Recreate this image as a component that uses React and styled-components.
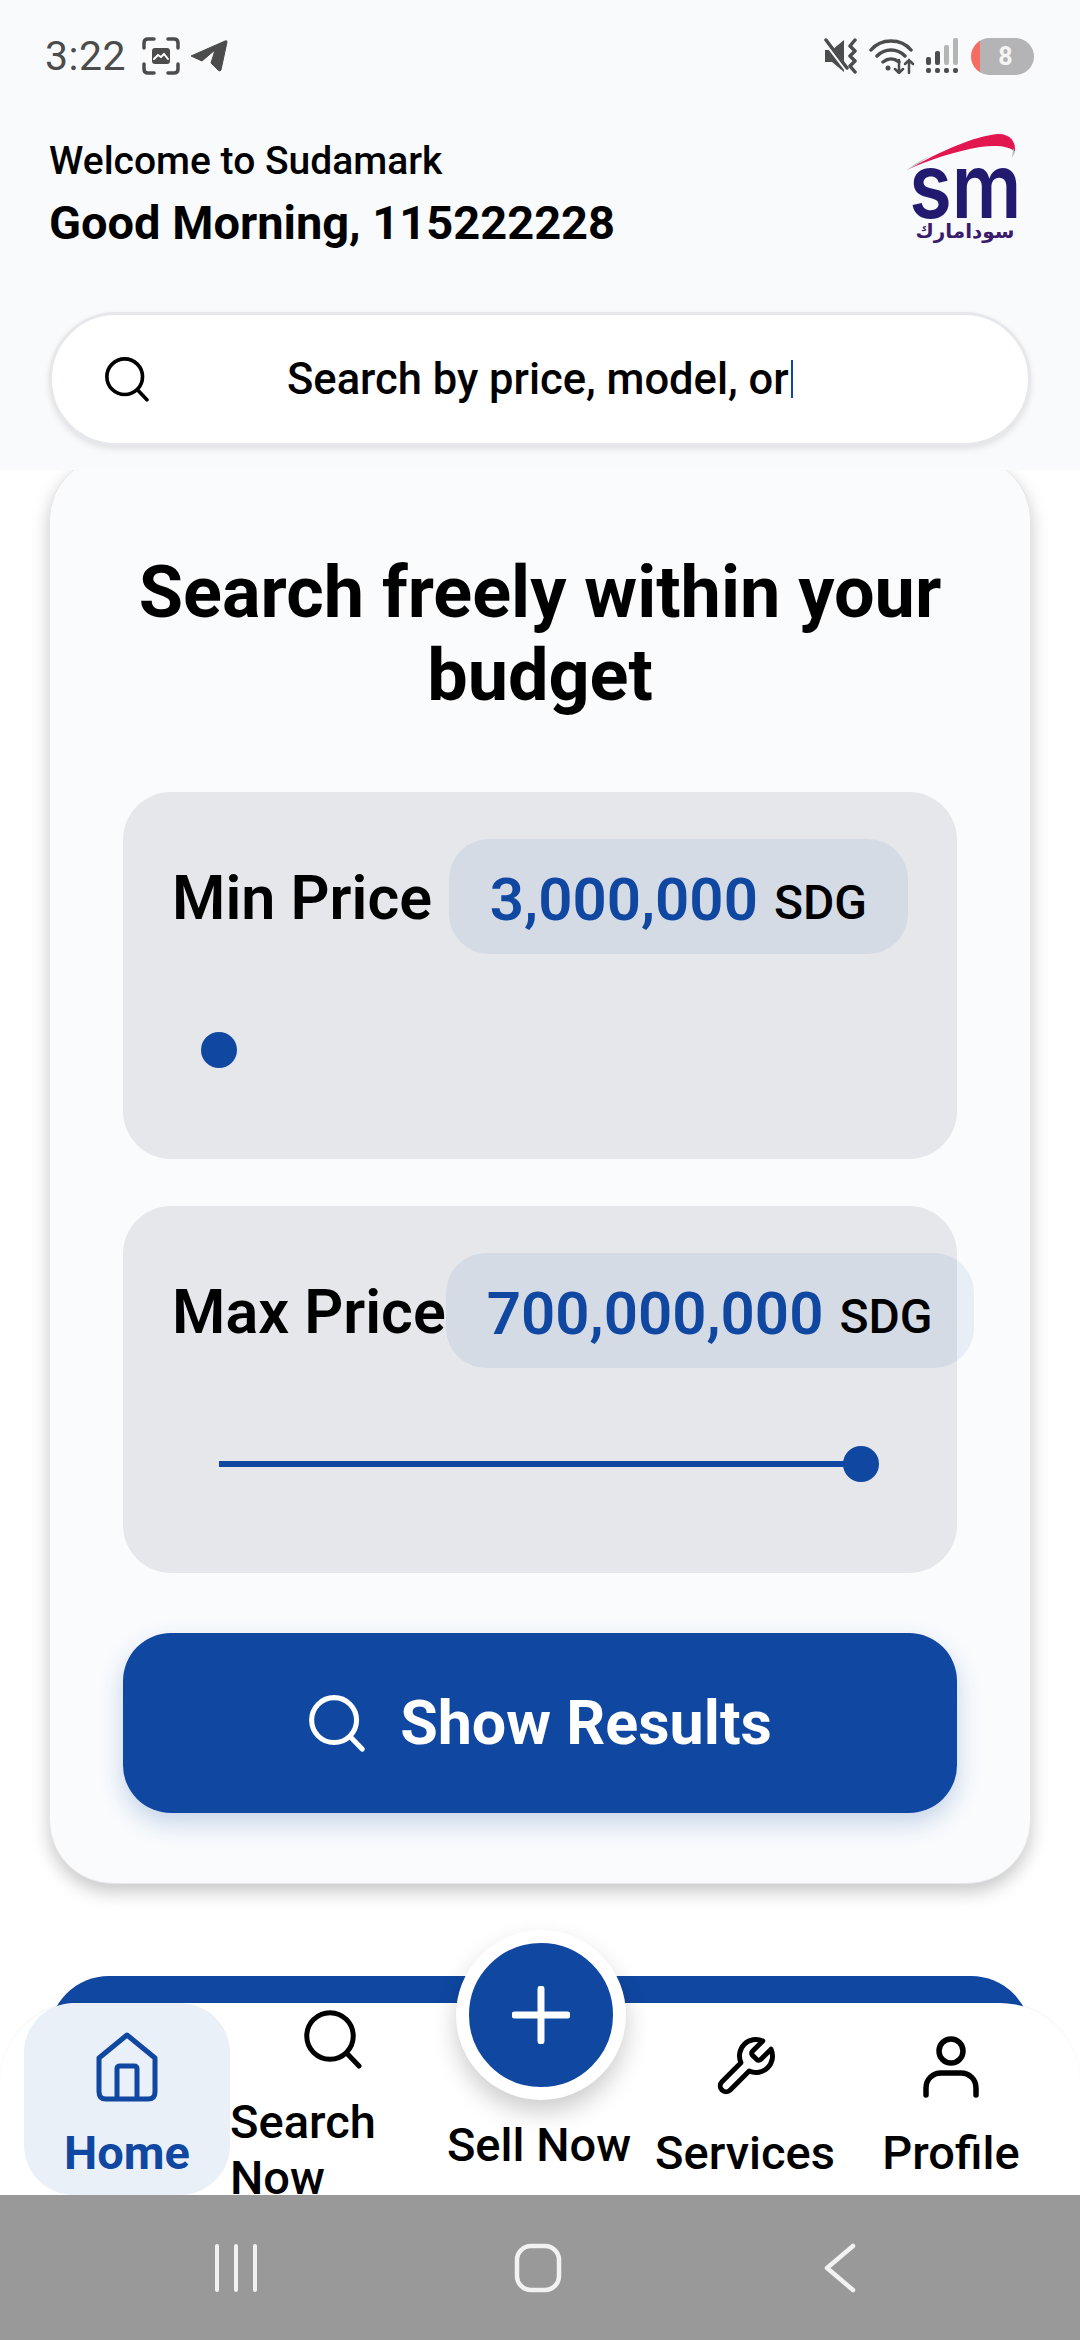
import React from "react";
import styled, { createGlobalStyle } from "styled-components";

const BLUE = "#0f47a1";

const GlobalStyle = createGlobalStyle`
    html, body {
        margin: 0;
        padding: 0;
        background: #fff;
        font-family: Roboto, "Noto Sans", sans-serif;
    }
    * { box-sizing: border-box; }
`;

const Page = styled.div`
    position: relative;
    width: 1080px;
    height: 2340px;
    overflow: hidden;
    display: flex;
    flex-direction: column;
    background: #fff;
`;

const Top = styled.div`
    flex: 0 0 470px;
    background: #f8fafc;
    display: flex;
    flex-direction: column;
`;

const StatusBar = styled.div`
    height: 112px;
    padding: 0 46px 0 45px;
    display: flex;
    align-items: center;
    justify-content: space-between;
    color: #4c4c4c;
`;

const StatusGroup = styled.div`
    display: flex;
    align-items: center;
    gap: ${(p) => p.$gap || 10}px;
`;

const Time = styled.span`
    font-size: 41px;
    letter-spacing: 0.5px;
    margin-right: 6px;
`;

const Header = styled.header`
    height: 148px;
    padding: 14px 60px 0 49px;
    display: flex;
    align-items: center;
    justify-content: space-between;
`;

const Welcome = styled.div`
    font-size: 39px;
    font-weight: 500;
    line-height: 60px;
    color: #000;
`;

const Greeting = styled.div`
    font-size: 47px;
    font-weight: 700;
    line-height: 64px;
    color: #000;
`;

const LogoBox = styled.div`
    position: relative;
    width: 116px;
    height: 115px;
    margin-top: -12px;
    display: flex;
    flex-direction: column;
    align-items: center;
    justify-content: flex-end;
`;

const Swoosh = styled.svg`
    position: absolute;
    left: 0;
    top: 0;
`;

const LogoMark = styled.span`
    font-family: Inter, sans-serif;
    font-size: 90px;
    font-weight: 600;
    line-height: 38px;
    height: 50px;
    margin-left: 6px;
    color: #221a6e;
    transform: scaleX(0.86);
`;

const LogoArabic = styled.span`
    font-family: "DejaVu Sans", sans-serif;
    direction: rtl;
    font-size: 20px;
    font-weight: 700;
    line-height: 28px;
    margin-left: 6px;
    color: #3a1c6c;
    white-space: nowrap;
`;

const SearchBar = styled.div`
    margin: 52px 49px 0;
    height: 134px;
    background: #fff;
    border-radius: 67px;
    border: 3px solid #e6e8ec;
    box-shadow: 0 3px 6px rgba(0, 0, 0, 0.1);
    padding: 0 0 0 52px;
    display: flex;
    align-items: center;
    color: #000;
`;

const SearchText = styled.div`
    margin-left: 137px;
    font-size: 43.5px;
    font-weight: 500;
    display: flex;
    align-items: center;
`;

const Caret = styled.span`
    width: 2px;
    height: 38px;
    background: ${BLUE};
    margin-left: 2px;
`;

const Scroll = styled.main`
    flex: 1;
    overflow: hidden;
    padding: 0 49px;
`;

const Card = styled.section`
    margin-top: -14px;
    height: 1428px;
    background: #f9fbfd;
    border-radius: 64px;
    border: 1px solid #e4e6ea;
    box-shadow: 0 8px 18px rgba(0, 0, 0, 0.22);
    padding: 94px 73px 0;
`;

const Title = styled.h1`
    margin: 0 -40px 75px;
    font-size: 72px;
    line-height: 83px;
    font-weight: 700;
    text-align: center;
    color: #000;
`;

const Panel = styled.div`
    height: 367px;
    margin-bottom: 47px;
    background: #e5e7eb;
    border-radius: 48px;
    padding: 47px 49px 0;
`;

const PriceRow = styled.div`
    display: flex;
    align-items: center;
    justify-content: space-between;
`;

const PriceLabel = styled.span`
    font-size: 61px;
    font-weight: 600;
    color: #000;
    white-space: nowrap;
    margin-top: 3px;
`;

const PricePill = styled.div`
    flex-shrink: 0;
    height: 115px;
    padding: 5px 41px 0;
    border-radius: 40px;
    background: rgba(15, 71, 161, 0.07);
    display: flex;
    align-items: center;
    gap: 16px;
    white-space: nowrap;
`;

const PriceValue = styled.span`
    font-size: 60px;
    font-weight: 600;
    color: ${BLUE};
`;

const Currency = styled.span`
    font-size: 48px;
    font-weight: 500;
    color: #000;
    margin-top: 6px;
`;

const Slider = styled.div`
    position: relative;
    height: 6px;
    margin: 93px 47px 0;
`;

const Track = styled.div`
    height: 6px;
    background: ${BLUE};
`;

const Thumb = styled.div`
    position: absolute;
    top: -15px;
    width: 36px;
    height: 36px;
    border-radius: 50%;
    background: ${BLUE};
    margin-left: -18px;
`;

const ResultsButton = styled.button`
    width: 100%;
    height: 180px;
    margin-top: 60px;
    border: none;
    border-radius: 48px;
    background: ${BLUE};
    color: #fff;
    font-family: inherit;
    font-size: 61px;
    font-weight: 700;
    box-shadow: 0 10px 24px rgba(15, 71, 161, 0.22);
    display: flex;
    align-items: center;
    justify-content: center;
    gap: 34px;
`;

const PeekCard = styled.div`
    margin-top: 92px;
    height: 300px;
    background: ${BLUE};
    border-radius: 60px;
`;

const BottomNav = styled.nav`
    position: absolute;
    left: 0;
    right: 0;
    bottom: 145px;
    height: 192px;
    background: #fff;
    border-radius: 80px 80px 0 0;
    box-shadow: 0 -1px 2px rgba(0, 0, 0, 0.05);
    padding: 0 24px;
    display: grid;
    grid-template-columns: repeat(5, 206px);
`;

const NavItem = styled.div`
    position: relative;
    height: 192px;
    padding-top: 16px;
    display: flex;
    flex-direction: column;
    align-items: center;
    justify-content: center;
    gap: ${(p) => p.$gap ?? 25}px;
    border-radius: 50px;
    background: ${(p) => (p.$active ? "#eaf0f7" : "transparent")};
    color: ${(p) => (p.$active ? BLUE : "#000")};
`;

const NavIcon = styled.div`
    width: 66px;
    height: 66px;
    display: flex;
    align-items: center;
    justify-content: center;
`;

const NavLabel = styled.span`
    font-size: 47px;
    line-height: 56px;
    font-weight: ${(p) => (p.$active ? 700 : 500)};
    white-space: nowrap;
`;

const WrappedLabel = styled(NavLabel)`
    white-space: normal;
    width: 100%;
    text-align: left;
    padding-right: 30px;
`;

const Fab = styled.div`
    position: absolute;
    top: -73px;
    left: 20px;
    width: 170px;
    height: 170px;
    border-radius: 50%;
    background: ${BLUE};
    border: 13px solid #fff;
    box-shadow: 0 12px 24px rgba(0, 0, 0, 0.2);
    display: flex;
    align-items: center;
    justify-content: center;
`;

const SystemNav = styled.div`
    position: absolute;
    left: 0;
    right: 0;
    bottom: 0;
    height: 145px;
    background: #999999;
    display: grid;
    grid-template-columns: repeat(3, 302px);
    padding-left: 85px;
    align-items: center;
    justify-items: center;
`;

const Battery = styled.div`
    width: 63px;
    height: 37px;
    margin-left: 4px;
    border-radius: 19px;
    overflow: hidden;
    background: linear-gradient(90deg, #f56c63 0 9px, #b4b4b6 9px);
    color: #f4f4f4;
    font-size: 25px;
    font-weight: 700;
    display: flex;
    align-items: center;
    justify-content: center;
    padding-left: 6px;
`;

const SearchIcon = ({ size, color = "currentColor", width = 2 }) => (
    <svg width={size} height={size} viewBox="0 0 24 24" fill="none" stroke={color} strokeWidth={width} strokeLinecap="round">
        <circle cx="10.8" cy="10.8" r="9.3" />
        <path d="M17.8 18 22.4 22.8" />
    </svg>
);

const ScreenshotIcon = () => (
    <svg width="38" height="38" viewBox="0 0 38 38" fill="none" stroke="#4c4c4c" strokeWidth="3.5" strokeLinecap="round">
        <path d="M2 11V6q0-4 4-4h6M26 2h6q4 0 4 4v5M36 27v5q0 4-4 4h-6M12 36H6q-4 0-4-4v-5" />
        <rect x="10" y="11" width="18" height="16" rx="3" fill="#4c4c4c" stroke="none" />
        <path d="M12 22l4-4 3 2 3-3 4 5" stroke="#fff" strokeWidth="2" />
    </svg>
);

const TelegramIcon = () => (
    <svg width="38" height="32" viewBox="0 0 38 32" fill="#4c4c4c">
        <path d="M1 16 35 1q2-1 2 1L31 30q-1 2-3 0l-7-7 4-13-13 11z" stroke="#4c4c4c" strokeLinejoin="round" />
    </svg>
);

const MuteIcon = () => (
    <svg width="36" height="36" viewBox="0 0 36 36" fill="none">
        <path d="M1 12h7L20 2v32L8 24H1z" fill="#4c4c4c" />
        <path d="M1 3 24 33" stroke="#f8fafc" strokeWidth="5" />
        <path d="M2 2 23 30" stroke="#4c4c4c" strokeWidth="3.5" strokeLinecap="round" />
        <path d="M31 2l-5 6 5 5-5 5 5 5-5 5 5 6" stroke="#4c4c4c" strokeWidth="3.5" strokeLinecap="round" strokeLinejoin="round" />
    </svg>
);

const WifiIcon = () => (
    <svg width="48" height="36" viewBox="0 0 48 36" fill="none" stroke="#4c4c4c" strokeWidth="3.5" strokeLinecap="round">
        <path d="M2 12C12 0 32 0 42 12M8 18c8-8 20-8 28 0M14 24c5-4 11-4 16 0" />
        <circle cx="19" cy="30" r="2.5" fill="#4c4c4c" stroke="none" />
        <path d="M30 22v13M26 31l4 4 4-4M40 35V22M36 26l4-4 4 4" strokeWidth="2.5" />
    </svg>
);

const SignalIcon = () => (
    <svg width="32" height="36" viewBox="0 0 32 36" fill="#4c4c4c">
        <rect x="0" y="30" width="5" height="5" rx="2" />
        <rect x="9" y="30" width="5" height="5" rx="2" />
        <rect x="18" y="30" width="5" height="5" rx="2" />
        <rect x="27" y="30" width="5" height="5" rx="2" />
        <rect x="0" y="19" width="5" height="8" rx="2" />
        <rect x="9" y="13" width="5" height="14" rx="2" />
        <rect x="18" y="7" width="5" height="20" rx="2" fill="#b5b5b5" />
        <rect x="27" y="0" width="5" height="27" rx="2" fill="#b5b5b5" />
    </svg>
);

const Logo = () => (
    <LogoBox>
        <Swoosh width="116" height="45" viewBox="40 20 116 45">
            <path d="M43 60C75 42 110 26 134 24 147 24 152 32 151 42 146 36 132 35 116 37 92 41 64 50 43 60z" fill="#e2174f" />
            <path d="M43 60C50 54 58 50 66 46 60 50 52 55 43 60zM151 42 148 48 149 38z" fill="#b9bcc4" />
        </Swoosh>
        <LogoMark>sm</LogoMark>
        <LogoArabic>سودامارك</LogoArabic>
    </LogoBox>
);

const HomeIcon = () => (
    <svg width="62" height="70" viewBox="0 0 62 70" fill="none" stroke={BLUE} strokeWidth="5" strokeLinejoin="round">
        <path d="M3 26 31 3 59 26V60q0 7-7 7H10q-7 0-7-7z" />
        <path d="M21 67V37q0-3 3-3H38q3 0 3 3V67" />
    </svg>
);

const WrenchIcon = () => (
    <svg width="66" height="66" viewBox="0 0 24 24" fill="none" stroke="#000" strokeWidth="1.8" strokeLinecap="round" strokeLinejoin="round">
        <path d="M14.7 6.3a1 1 0 0 0 0 1.4l1.6 1.6a1 1 0 0 0 1.4 0l3.77-3.77a6 6 0 0 1-7.94 7.94l-6.91 6.91a2.12 2.12 0 0 1-3-3l6.91-6.91a6 6 0 0 1 7.94-7.94l-3.76 3.76z" />
    </svg>
);

const ProfileIcon = () => (
    <svg width="56" height="62" viewBox="0 0 56 62" fill="none" stroke="#000" strokeWidth="5.5" strokeLinecap="round">
        <circle cx="28" cy="15" r="12" />
        <path d="M3 59V52C3 43 10 37 18 37H38C46 37 53 43 53 52V59" />
    </svg>
);

const MenuBars = () => (
    <svg width="44" height="48" viewBox="0 0 44 48" fill="none" stroke="#f2f2f2" strokeWidth="4" strokeLinecap="round">
        <path d="M3 2V46M22 2V46M41 2V46" />
    </svg>
);

const HomeSquare = () => (
    <svg width="48" height="50" viewBox="0 0 48 50" fill="none" stroke="#f2f2f2" strokeWidth="4.5">
        <rect x="3" y="3" width="42" height="44" rx="14" />
    </svg>
);

const BackArrow = () => (
    <svg width="32" height="50" viewBox="0 0 32 50" fill="none" stroke="#f2f2f2" strokeWidth="4.5" strokeLinecap="round" strokeLinejoin="round">
        <path d="M29 3 3 25 29 47" />
    </svg>
);

const PriceBox = ({ label, value, fill }) => (
    <Panel>
        <PriceRow>
            <PriceLabel>{label}</PriceLabel>
            <PricePill>
                <PriceValue>{value}</PriceValue>
                <Currency>SDG</Currency>
            </PricePill>
        </PriceRow>
        <Slider>
            {fill > 0 && <Track />}
            <Thumb style={{ left: `${fill}%` }} />
        </Slider>
    </Panel>
);

const App = () => {
    return (
        <Page>
            <GlobalStyle />
            <Top>
                <StatusBar>
                    <StatusGroup>
                        <Time>3:22</Time>
                        <ScreenshotIcon />
                        <TelegramIcon />
                    </StatusGroup>
                    <StatusGroup $gap={9}>
                        <MuteIcon />
                        <WifiIcon />
                        <SignalIcon />
                        <Battery>8</Battery>
                    </StatusGroup>
                </StatusBar>
                <Header>
                    <div>
                        <Welcome>Welcome to Sudamark</Welcome>
                        <Greeting>Good Morning, 115222228</Greeting>
                    </div>
                    <Logo />
                </Header>
                <SearchBar>
                    <SearchIcon size={46} width={1.9} />
                    <SearchText>
                        Search by price, model, or
                        <Caret />
                    </SearchText>
                </SearchBar>
            </Top>
            <Scroll>
                <Card>
                    <Title>Search freely within your budget</Title>
                    <PriceBox label="Min Price" value="3,000,000" fill={0} />
                    <PriceBox label="Max Price" value="700,000,000" fill={100} />
                    <ResultsButton>
                        <SearchIcon size={58} width={2.1} />
                        Show Results
                    </ResultsButton>
                </Card>
                <PeekCard />
            </Scroll>
            <BottomNav>
                <NavItem $active>
                    <NavIcon><HomeIcon /></NavIcon>
                    <NavLabel $active>Home</NavLabel>
                </NavItem>
                <NavItem>
                    <NavIcon><SearchIcon size={60} width={2} /></NavIcon>
                    <WrappedLabel>Search Now</WrappedLabel>
                </NavItem>
                <NavItem $gap={10}>
                    <Fab>
                        <svg width="58" height="58" viewBox="0 0 58 58" stroke="#fff" strokeWidth="7" strokeLinecap="round">
                            <path d="M29 3V55M3 29H55" />
                        </svg>
                    </Fab>
                    <NavIcon />
                    <NavLabel>Sell Now</NavLabel>
                </NavItem>
                <NavItem>
                    <NavIcon><WrenchIcon /></NavIcon>
                    <NavLabel>Services</NavLabel>
                </NavItem>
                <NavItem>
                    <NavIcon><ProfileIcon /></NavIcon>
                    <NavLabel>Profile</NavLabel>
                </NavItem>
            </BottomNav>
            <SystemNav>
                <MenuBars />
                <HomeSquare />
                <BackArrow />
            </SystemNav>
        </Page>
    );
};

export default App;
